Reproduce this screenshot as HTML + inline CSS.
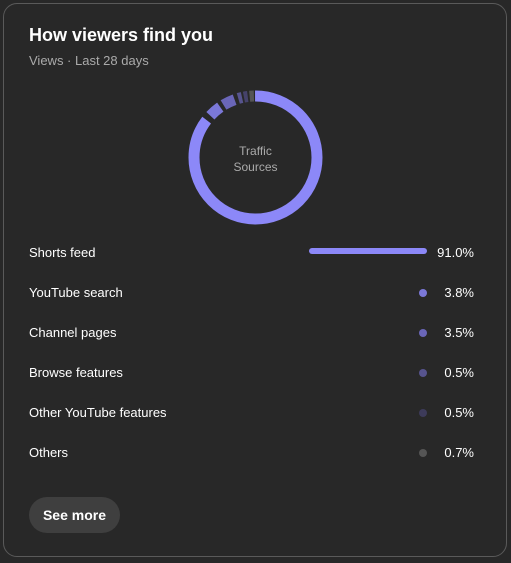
<!DOCTYPE html>
<html><head><meta charset="utf-8"><style>
html,body{margin:0;padding:0;background:#282828;width:511px;height:563px;overflow:hidden;font-family:"Liberation Sans",Roboto,sans-serif;}
.card{position:absolute;left:3px;top:3px;width:502px;height:552px;border:1px solid #5a5a5a;border-radius:14px;background:#282828;}
.t{position:absolute;left:29px;top:25px;font-size:18px;font-weight:bold;color:#fff;}
.s{position:absolute;left:29px;top:53px;font-size:13px;color:#aaa;}
.row{position:absolute;left:29px;width:445px;height:20px;font-size:13px;color:#fff;}
.row .l{position:absolute;left:0;top:0;}
.row .p{position:absolute;right:0;top:0;}
.dot{position:absolute;left:390px;top:4px;width:8px;height:8px;border-radius:50%;}
.bar{position:absolute;left:280px;top:3px;width:118px;height:6px;border-radius:3px;background:#8c88f8;}
.btn{position:absolute;left:29px;top:497px;width:91px;height:36px;border-radius:18px;background:#3f3f3f;color:#fff;font-size:14px;font-weight:bold;text-align:center;line-height:36px;}
</style></head><body>
<div class="card"></div>
<div class="t">How viewers find you</div>
<div class="s">Views · Last 28 days</div>
<svg style="position:absolute;left:0;top:0" width="511" height="563">
<g transform="rotate(-90 255.5 157.5)" fill="none" stroke-width="11">
<circle cx="255.5" cy="157.5" r="61.5" pathLength="100" stroke="#8c88f8" stroke-dasharray="85.5 14.5" stroke-dashoffset="0"/>
<circle cx="255.5" cy="157.5" r="61.5" pathLength="100" stroke="#7b78d8" stroke-dasharray="3.4 96.6" stroke-dashoffset="-87"/>
<circle cx="255.5" cy="157.5" r="61.5" pathLength="100" stroke="#6a66b8" stroke-dasharray="3.2 96.8" stroke-dashoffset="-91.4"/>
<circle cx="255.5" cy="157.5" r="61.5" pathLength="100" stroke="#57548e" stroke-dasharray="1 99" stroke-dashoffset="-95.6"/>
<circle cx="255.5" cy="157.5" r="61.5" pathLength="100" stroke="#45426a" stroke-dasharray="1 99" stroke-dashoffset="-97.1"/>
<circle cx="255.5" cy="157.5" r="61.5" pathLength="100" stroke="#555" stroke-dasharray="1.1 98.9" stroke-dashoffset="-98.6"/>
</g>
<text x="255.5" y="155" text-anchor="middle" font-size="12" fill="#aaa" font-family="Liberation Sans,sans-serif">Traffic</text>
<text x="255.5" y="171" text-anchor="middle" font-size="12" fill="#aaa" font-family="Liberation Sans,sans-serif">Sources</text>
</svg>
<div class="row" style="top:245px"><span class="l">Shorts feed</span><div class="bar"></div><span class="p">91.0%</span></div>
<div class="row" style="top:285px"><span class="l">YouTube search</span><div class="dot" style="background:#7b78d8"></div><span class="p">3.8%</span></div>
<div class="row" style="top:325px"><span class="l">Channel pages</span><div class="dot" style="background:#6a66b8"></div><span class="p">3.5%</span></div>
<div class="row" style="top:365px"><span class="l">Browse features</span><div class="dot" style="background:#57548e"></div><span class="p">0.5%</span></div>
<div class="row" style="top:405px"><span class="l">Other YouTube features</span><div class="dot" style="background:#3d3b5a"></div><span class="p">0.5%</span></div>
<div class="row" style="top:445px"><span class="l">Others</span><div class="dot" style="background:#555"></div><span class="p">0.7%</span></div>
<div class="btn">See more</div>
</body></html>
